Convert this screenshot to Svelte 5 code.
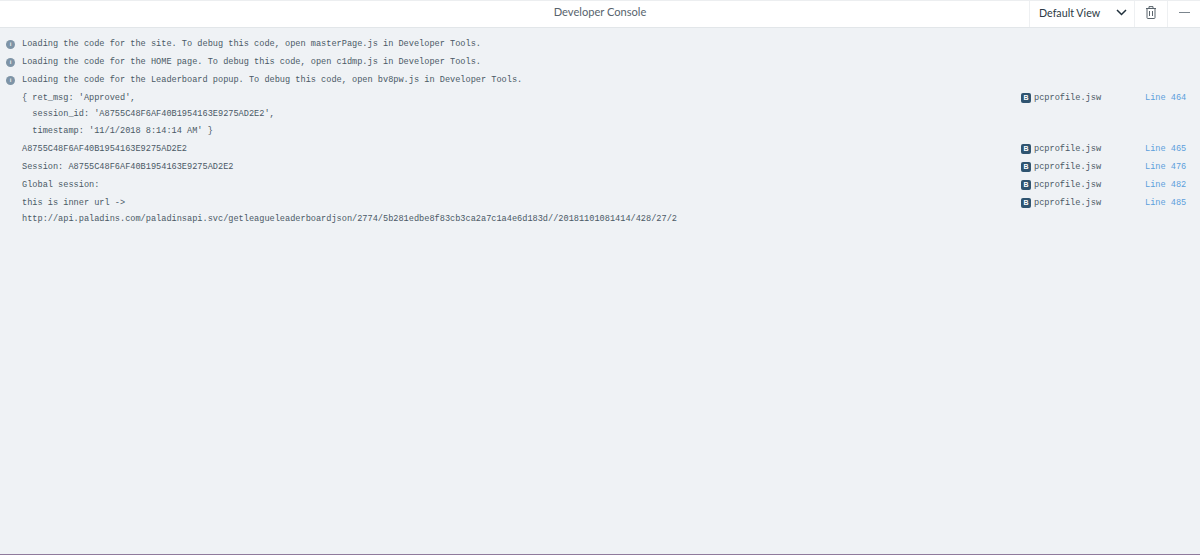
<script>
	// console rows; source + line only on logged messages
	const infos = [
		'Loading the code for the site. To debug this code, open masterPage.js in Developer Tools.',
		'Loading the code for the HOME page. To debug this code, open c1dmp.js in Developer Tools.',
		'Loading the code for the Leaderboard popup. To debug this code, open bv8pw.js in Developer Tools.'
	];
	const logs = [
		{
			lines: ["{ ret_msg: 'Approved',", "  session_id: 'A8755C48F6AF40B1954163E9275AD2E2',", "  timestamp: '11/1/2018 8:14:14 AM' }"],
			line: 464
		},
		{ lines: ['A8755C48F6AF40B1954163E9275AD2E2'], line: 465 },
		{ lines: ['Session: A8755C48F6AF40B1954163E9275AD2E2'], line: 476 },
		{ lines: ['Global session:'], line: 482 },
		{
			lines: ['this is inner url ->', 'http://api.paladins.com/paladinsapi.svc/getleagueleaderboardjson/2774/5b281edbe8f83cb3ca2a7c1a4e6d183d//20181101081414/428/27/2'],
			line: 485
		}
	];
</script>

<div class="console">
	<header class="topbar">
		<div class="title">Developer Console</div>
		<div class="tools">
			<button class="view">
				<span>Default View</span>
				<svg width="11" height="7" viewBox="0 0 11 7"><path d="M1 1l4.5 4.5L10 1" fill="none" stroke="#20303c" stroke-width="1.5" /></svg>
			</button>
			<button class="icon" aria-label="Clear">
				<svg width="10" height="13" viewBox="0 0 10 13" fill="none" stroke="#5a646c" stroke-width="1">
					<path d="M0 2.5h10M3 2.5V.6h4v1.9M1 2.5v9.2a.8.8 0 0 0 .8.8h6.4a.8.8 0 0 0 .8-.8V2.5" />
					<path d="M3.5 5v5M6.5 5v5" />
				</svg>
			</button>
			<button class="icon" aria-label="Minimize">
				<span class="dash"></span>
			</button>
		</div>
	</header>

	<main class="rows">
		{#each infos as text}
			<div class="row info">
				<span class="info-dot">i</span>
				<span class="msg">{text}</span>
			</div>
		{/each}
		{#each logs as log}
			<div class="row log">
				<div class="msg">
					{#each log.lines as l}
						<div class="msg-line">{l}</div>
					{/each}
				</div>
				{#if log.line}
					<div class="source">
						<span class="badge">B</span>
						<span class="file">pcprofile.jsw</span>
					</div>
					<div class="line-no">Line {log.line}</div>
				{/if}
			</div>
		{/each}
	</main>
</div>

<style>
	:global(body) {
		margin: 0;
		background: #eff2f5;
	}

	.console {
		height: 555px;
		box-sizing: border-box;
		display: flex;
		flex-direction: column;
		background: #eff2f5;
		border-bottom: 1px solid #8f7a9c;
		overflow: hidden;
	}

	.topbar {
		height: 28px;
		box-sizing: border-box;
		flex-shrink: 0;
		position: relative;
		display: flex;
		justify-content: flex-end;
		background: #fff;
		border-top: 1px solid #eceef0;
		border-bottom: 1px solid #e2e6e9;
	}

	.title {
		position: absolute;
		left: 0;
		right: 0;
		top: 3px;
		text-align: center;
		font: 11.1px/16px Lato, sans-serif;
		color: #57636d;
	}

	.tools {
		display: flex;
	}

	button {
		display: flex;
		align-items: center;
		justify-content: center;
		padding: 0 0 4px;
		background: none;
		border: 0;
		border-left: 1px solid #eef0f2;
	}

	.view {
		width: 105px;
		gap: 16px;
		font: 10.7px Lato, sans-serif;
		color: #2b3a45;
		justify-content: flex-start;
		padding-left: 9px;
		box-sizing: border-box;
	}

	.icon {
		width: 33px;
	}

	.dash {
		width: 11px;
		height: 1px;
		background: #7b858d;
	}

	.rows {
		padding-top: 7px;
		font: 8.6px/18px "Liberation Mono", monospace;
		color: #4a5965;
	}

	.row {
		display: flex;
		white-space: pre;
	}

	.info {
		align-items: center;
		padding-left: 6px;
		gap: 7px;
	}

	.info-dot {
		width: 9px;
		height: 9px;
		border-radius: 50%;
		background: #7e94a6;
		color: #eff2f5;
		font: 700 6px/9px "Liberation Sans", sans-serif;
		text-align: center;
	}

	.log {
		padding: 0.75px 0 0.75px 22px;
		line-height: 16.5px;
	}

	.msg {
		flex: 1;
	}

	.source {
		width: 124px;
		display: flex;
		align-items: center;
		height: 16.5px;
		gap: 3px;
	}

	.badge {
		width: 10px;
		height: 10px;
		border-radius: 2px;
		background: #2f5470;
		color: #fff;
		font: 700 7px/10px "Liberation Sans", sans-serif;
		text-align: center;
	}

	.line-no {
		width: 55px;
		color: #5c9fdc;
	}
</style>
